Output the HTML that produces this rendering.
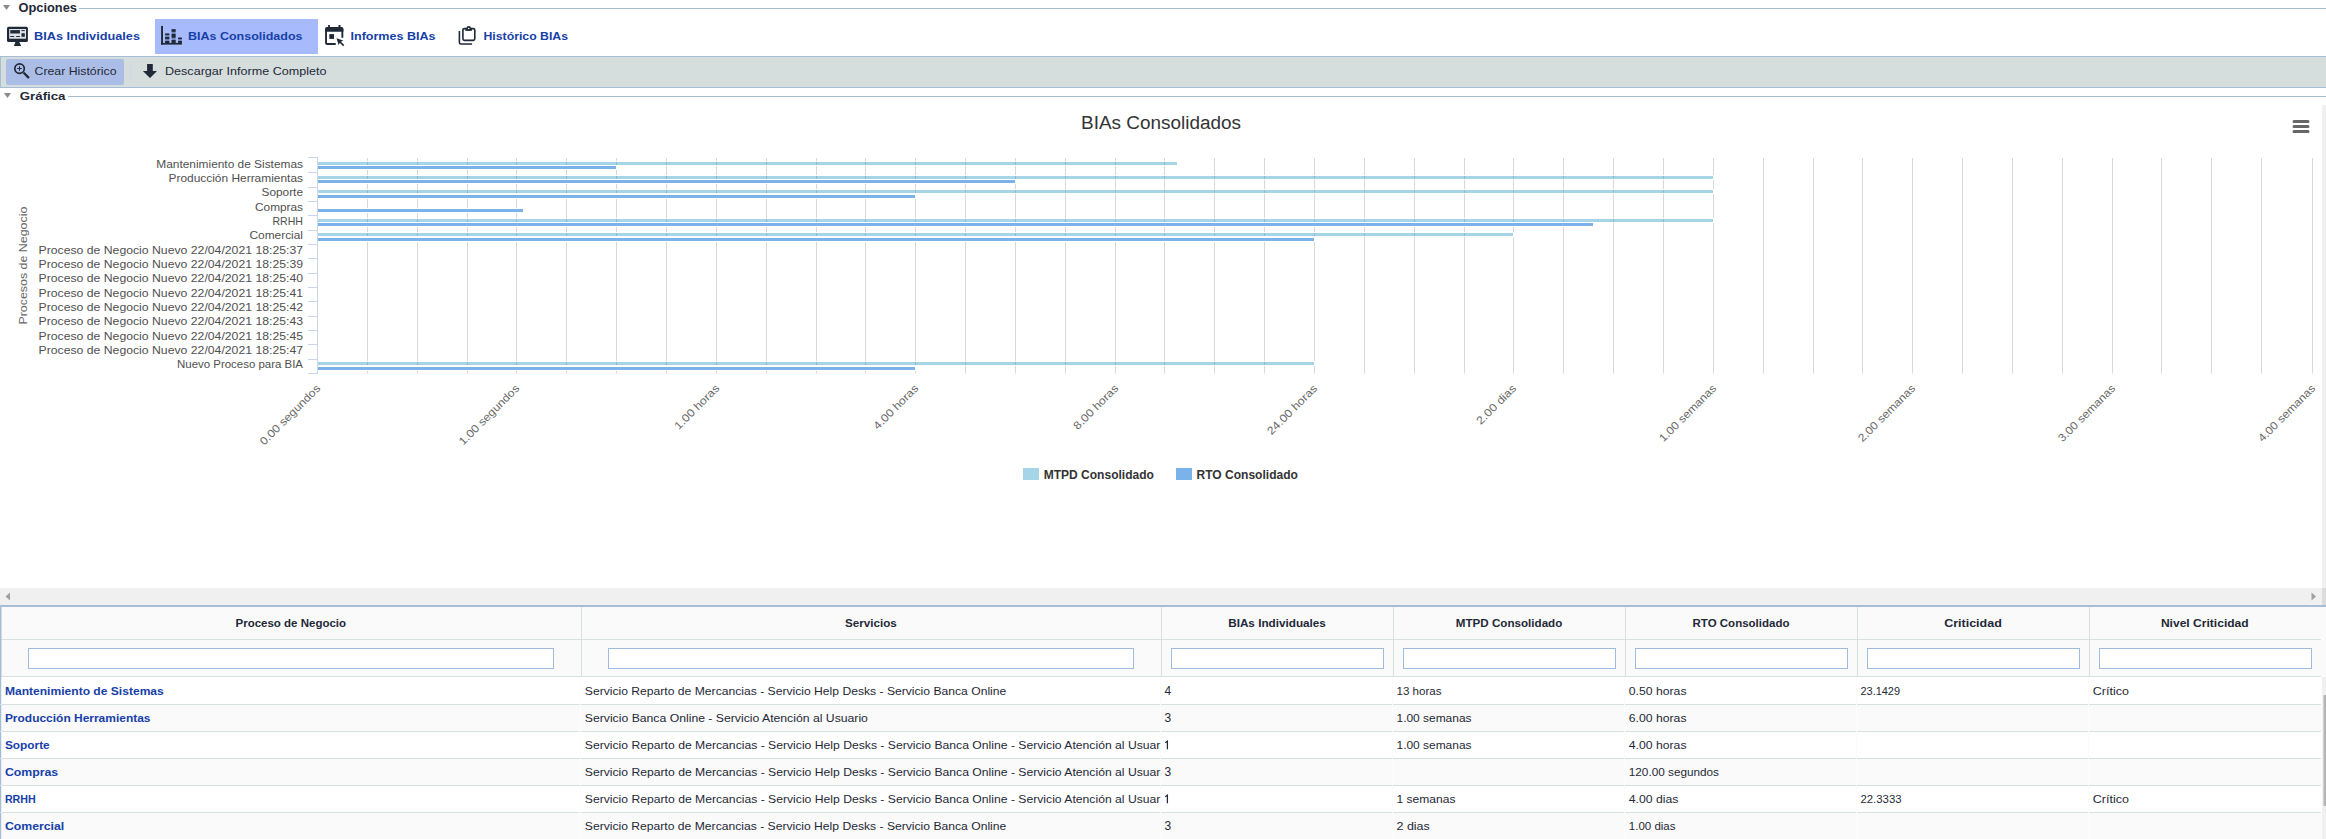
<!DOCTYPE html><html><head><meta charset="utf-8"><style>html,body{margin:0;padding:0;background:#fff;width:2326px;height:839px;overflow:hidden}svg{display:block;font-family:"Liberation Sans", sans-serif}</style></head><body>
<svg width="2326" height="839" viewBox="0 0 2326 839">
<path d="M3 5 L10 5 L6.5 10 Z" fill="#8a8a8a"/>
<text x="18.50" y="11.80" font-size="12" font-weight="bold" fill="#1f2937" text-anchor="start" textLength="58.50" lengthAdjust="spacingAndGlyphs" >Opciones</text>
<rect x="79" y="8" width="2247" height="1" fill="#a6bdd7"/>
<rect x="155" y="19" width="163" height="35" fill="#a7bbfc"/>
<text x="34.00" y="40.00" font-size="11.5" font-weight="bold" fill="#1740a8" text-anchor="start" textLength="106.00" lengthAdjust="spacingAndGlyphs" >BIAs Individuales</text>
<text x="188.00" y="40.00" font-size="11.5" font-weight="bold" fill="#1740a8" text-anchor="start" textLength="114.50" lengthAdjust="spacingAndGlyphs" >BIAs Consolidados</text>
<text x="350.50" y="40.00" font-size="11.5" font-weight="bold" fill="#1740a8" text-anchor="start" textLength="85.00" lengthAdjust="spacingAndGlyphs" >Informes BIAs</text>
<text x="483.50" y="40.00" font-size="11.5" font-weight="bold" fill="#1740a8" text-anchor="start" textLength="84.50" lengthAdjust="spacingAndGlyphs" >Histórico BIAs</text>
<g fill="#1f2937"><rect x="7" y="26.7" width="20.9" height="15.3" rx="1.6"/><path d="M15.6 41.5 L19.1 41.5 L21.2 46 L13.9 46 Z"/></g><rect x="9.2" y="29" width="16.8" height="9.7" fill="#dfe2e6"/><g fill="#1f2937"><rect x="10.3" y="30.1" width="9.6" height="3.4"/><rect x="10.3" y="36" width="3.9" height="1"/><rect x="16.2" y="36" width="3.7" height="1"/><rect x="21.4" y="30.1" width="3.4" height="1"/><rect x="21.5" y="33.2" width="3.3" height="3.6"/></g>
<g fill="#1f2937" fill-opacity="0.35"><rect x="165.1" y="33.5" width="4.2" height="9.4"/><rect x="171.6" y="29.2" width="4" height="13.7"/><rect x="178.1" y="37.6" width="3.8" height="5.3"/></g><g fill="#1f2937"><rect x="161.1" y="25.9" width="1.9" height="18.7"/><rect x="161.1" y="42.9" width="20.8" height="1.7"/><rect x="165.1" y="33.5" width="4.2" height="1.6"/><rect x="165.1" y="37" width="4.2" height="2.1"/><rect x="165.1" y="41" width="4.2" height="2"/><rect x="171.6" y="29.2" width="4" height="2.6"/><rect x="171.6" y="33.9" width="4" height="3.8"/><rect x="171.6" y="40" width="4" height="3"/><rect x="178.1" y="37.6" width="3.8" height="1.5"/><rect x="178.1" y="41" width="3.8" height="2"/></g>
<g fill="none" stroke="#1f2937" stroke-width="1.9"><path d="M335.7 44.05 H327.2 Q326.05 44.05 326.05 42.9 V29 M342.35 29 V37.7"/></g><g fill="#1f2937"><path d="M325.1 31.8 V28.8 Q325.1 27.1 326.8 27.1 H341.7 Q343.4 27.1 343.4 28.8 V31.8 Z"/><rect x="328.1" y="25" width="1.8" height="3"/><rect x="338.5" y="25" width="2" height="3"/><rect x="329.3" y="34.1" width="4.7" height="4.8"/><path d="M336.5 38.3 L343.3 40.6 L340.9 41.7 L344.3 45.1 L343.1 46.2 L339.7 42.8 L338.7 45.3 Z"/></g>
<g fill="none" stroke="#1f2937" stroke-width="1.6"><path d="M459.4 31.1 V42.5 Q459.4 44 460.9 44 H472.1"/><rect x="462.9" y="28.6" width="11.9" height="11.8" rx="1.6"/></g><g fill="#1f2937"><rect x="465.3" y="28.8" width="6.7" height="2"/><circle cx="468.7" cy="28.4" r="2.3"/></g><circle cx="468.7" cy="28.5" r="0.8" fill="#fff"/>
<rect x="0" y="56" width="2326" height="32" fill="#d5dddd"/>
<rect x="0" y="56" width="2326" height="1" fill="#a6bdd7"/>
<rect x="0" y="87" width="2326" height="1" fill="#a6bdd7"/>
<rect x="0" y="56" width="1" height="32" fill="#a6bdd7"/>
<rect x="6" y="59" width="118" height="26" rx="2" fill="#abbde6"/>
<rect x="130" y="62" width="1" height="20" fill="#c9dbe9"/>
<g fill="none" stroke="#1f2937"><circle cx="19.55" cy="68.6" r="4.75" stroke-width="1.7"/><path d="M24.2 73.3 L28.3 77.4" stroke-width="2.3" stroke-linecap="round"/><path d="M19.5 66.2 V70.8 M17.2 68.5 H21.8" stroke-width="1"/></g>
<text x="34.50" y="74.80" font-size="11.2" font-weight="normal" fill="#1f2937" text-anchor="start" textLength="82.00" lengthAdjust="spacingAndGlyphs" >Crear Histórico</text>
<path d="M147.1 64 H152.8 V71.1 H157 L150 77.9 L142.9 71.1 H147.1 Z" fill="#1f2937"/>
<text x="165.00" y="74.80" font-size="11.2" font-weight="normal" fill="#1f2937" text-anchor="start" textLength="161.50" lengthAdjust="spacingAndGlyphs" >Descargar Informe Completo</text>
<path d="M4 93 L11 93 L7.5 98 Z" fill="#8a8a8a"/>
<text x="19.80" y="99.80" font-size="11.5" font-weight="bold" fill="#1f2937" text-anchor="start" textLength="45.70" lengthAdjust="spacingAndGlyphs" >Gráfica</text>
<rect x="68" y="96" width="2258" height="1" fill="#a6bdd7"/>
<text x="1081.00" y="128.80" font-size="18" font-weight="normal" fill="#333333" text-anchor="start" textLength="160.00" lengthAdjust="spacingAndGlyphs" >BIAs Consolidados</text>
<g stroke="#666" stroke-width="3" stroke-linecap="round"><path d="M2294 121.5 H2308 M2294 126.5 H2308 M2294 131.5 H2308"/></g>
<path d="M367.5 158 V373.5 M417.5 158 V373.5 M467.5 158 V373.5 M516.5 158 V373.5 M566.5 158 V373.5 M616.5 158 V373.5 M666.5 158 V373.5 M716.5 158 V373.5 M766.5 158 V373.5 M816.5 158 V373.5 M865.5 158 V373.5 M915.5 158 V373.5 M965.5 158 V373.5 M1015.5 158 V373.5 M1065.5 158 V373.5 M1115.5 158 V373.5 M1164.5 158 V373.5 M1214.5 158 V373.5 M1264.5 158 V373.5 M1314.5 158 V373.5 M1364.5 158 V373.5 M1414.5 158 V373.5 M1464.5 158 V373.5 M1513.5 158 V373.5 M1563.5 158 V373.5 M1613.5 158 V373.5 M1663.5 158 V373.5 M1713.5 158 V373.5 M1763.5 158 V373.5 M1813.5 158 V373.5 M1862.5 158 V373.5 M1912.5 158 V373.5 M1962.5 158 V373.5 M2012.5 158 V373.5 M2062.5 158 V373.5 M2112.5 158 V373.5 M2161.5 158 V373.5 M2211.5 158 V373.5 M2261.5 158 V373.5 M2312.5 158 V373.5" stroke="#d8d8d8" stroke-width="1" fill="none"/>
<rect x="317" y="161" width="861" height="5" fill="#fff"/>
<rect x="317" y="165" width="300" height="5" fill="#fff"/>
<rect x="317" y="175" width="1397" height="5" fill="#fff"/>
<rect x="317" y="179" width="699" height="5" fill="#fff"/>
<rect x="317" y="189" width="1397" height="5" fill="#fff"/>
<rect x="317" y="194" width="599" height="5" fill="#fff"/>
<rect x="317" y="208" width="207" height="5" fill="#fff"/>
<rect x="317" y="218" width="1397" height="5" fill="#fff"/>
<rect x="317" y="222" width="1277" height="5" fill="#fff"/>
<rect x="317" y="232" width="1197" height="5" fill="#fff"/>
<rect x="317" y="237" width="998" height="5" fill="#fff"/>
<rect x="317" y="361" width="998" height="5" fill="#fff"/>
<rect x="317" y="366" width="599" height="5" fill="#fff"/>
<rect x="318" y="162" width="859" height="3" fill="#a5d5e6"/>
<path d="M367.5 162 V165 M417.5 162 V165 M467.5 162 V165 M516.5 162 V165 M566.5 162 V165 M616.5 162 V165 M666.5 162 V165 M716.5 162 V165 M766.5 162 V165 M816.5 162 V165 M865.5 162 V165 M915.5 162 V165 M965.5 162 V165 M1015.5 162 V165 M1065.5 162 V165 M1115.5 162 V165 M1164.5 162 V165" stroke="#2a5d70" stroke-opacity="0.22" stroke-width="1" fill="none"/>
<rect x="318" y="166" width="298" height="3" fill="#7cb2ea"/>
<rect x="318" y="176" width="1395" height="3" fill="#a5d5e6"/>
<path d="M367.5 176 V179 M417.5 176 V179 M467.5 176 V179 M516.5 176 V179 M566.5 176 V179 M616.5 176 V179 M666.5 176 V179 M716.5 176 V179 M766.5 176 V179 M816.5 176 V179 M865.5 176 V179 M915.5 176 V179 M965.5 176 V179 M1015.5 176 V179 M1065.5 176 V179 M1115.5 176 V179 M1164.5 176 V179 M1214.5 176 V179 M1264.5 176 V179 M1314.5 176 V179 M1364.5 176 V179 M1414.5 176 V179 M1464.5 176 V179 M1513.5 176 V179 M1563.5 176 V179 M1613.5 176 V179 M1663.5 176 V179" stroke="#2a5d70" stroke-opacity="0.22" stroke-width="1" fill="none"/>
<rect x="318" y="180" width="697" height="3" fill="#7cb2ea"/>
<rect x="318" y="190" width="1395" height="3" fill="#a5d5e6"/>
<path d="M367.5 190 V193 M417.5 190 V193 M467.5 190 V193 M516.5 190 V193 M566.5 190 V193 M616.5 190 V193 M666.5 190 V193 M716.5 190 V193 M766.5 190 V193 M816.5 190 V193 M865.5 190 V193 M915.5 190 V193 M965.5 190 V193 M1015.5 190 V193 M1065.5 190 V193 M1115.5 190 V193 M1164.5 190 V193 M1214.5 190 V193 M1264.5 190 V193 M1314.5 190 V193 M1364.5 190 V193 M1414.5 190 V193 M1464.5 190 V193 M1513.5 190 V193 M1563.5 190 V193 M1613.5 190 V193 M1663.5 190 V193" stroke="#2a5d70" stroke-opacity="0.22" stroke-width="1" fill="none"/>
<rect x="318" y="195" width="597" height="3" fill="#7cb2ea"/>
<rect x="318" y="209" width="205" height="3" fill="#7cb2ea"/>
<rect x="318" y="219" width="1395" height="3" fill="#a5d5e6"/>
<path d="M367.5 219 V222 M417.5 219 V222 M467.5 219 V222 M516.5 219 V222 M566.5 219 V222 M616.5 219 V222 M666.5 219 V222 M716.5 219 V222 M766.5 219 V222 M816.5 219 V222 M865.5 219 V222 M915.5 219 V222 M965.5 219 V222 M1015.5 219 V222 M1065.5 219 V222 M1115.5 219 V222 M1164.5 219 V222 M1214.5 219 V222 M1264.5 219 V222 M1314.5 219 V222 M1364.5 219 V222 M1414.5 219 V222 M1464.5 219 V222 M1513.5 219 V222 M1563.5 219 V222 M1613.5 219 V222 M1663.5 219 V222" stroke="#2a5d70" stroke-opacity="0.22" stroke-width="1" fill="none"/>
<rect x="318" y="223" width="1275" height="3" fill="#7cb2ea"/>
<rect x="318" y="233" width="1195" height="3" fill="#a5d5e6"/>
<path d="M367.5 233 V236 M417.5 233 V236 M467.5 233 V236 M516.5 233 V236 M566.5 233 V236 M616.5 233 V236 M666.5 233 V236 M716.5 233 V236 M766.5 233 V236 M816.5 233 V236 M865.5 233 V236 M915.5 233 V236 M965.5 233 V236 M1015.5 233 V236 M1065.5 233 V236 M1115.5 233 V236 M1164.5 233 V236 M1214.5 233 V236 M1264.5 233 V236 M1314.5 233 V236 M1364.5 233 V236 M1414.5 233 V236 M1464.5 233 V236" stroke="#2a5d70" stroke-opacity="0.22" stroke-width="1" fill="none"/>
<rect x="318" y="238" width="996" height="3" fill="#7cb2ea"/>
<rect x="318" y="362" width="996" height="3" fill="#a5d5e6"/>
<path d="M367.5 362 V365 M417.5 362 V365 M467.5 362 V365 M516.5 362 V365 M566.5 362 V365 M616.5 362 V365 M666.5 362 V365 M716.5 362 V365 M766.5 362 V365 M816.5 362 V365 M865.5 362 V365 M915.5 362 V365 M965.5 362 V365 M1015.5 362 V365 M1065.5 362 V365 M1115.5 362 V365 M1164.5 362 V365 M1214.5 362 V365 M1264.5 362 V365" stroke="#2a5d70" stroke-opacity="0.22" stroke-width="1" fill="none"/>
<rect x="318" y="367" width="597" height="3" fill="#7cb2ea"/>
<path d="M317.5 157 V374 M308 157.5 H317 M308 172.5 H317 M308 187.5 H317 M308 201.5 H317 M308 215.5 H317 M308 230.5 H317 M308 244.5 H317 M308 258.5 H317 M308 273.5 H317 M308 287.5 H317 M308 301.5 H317 M308 316.5 H317 M308 330.5 H317 M308 344.5 H317 M308 359.5 H317 M308 373.5 H317" stroke="#ccd6eb" stroke-width="1" fill="none"/>
<text x="156.30" y="168.00" font-size="11" font-weight="normal" fill="#505050" text-anchor="start" textLength="146.70" lengthAdjust="spacingAndGlyphs" >Mantenimiento de Sistemas</text>
<text x="168.50" y="182.00" font-size="11" font-weight="normal" fill="#505050" text-anchor="start" textLength="134.50" lengthAdjust="spacingAndGlyphs" >Producción Herramientas</text>
<text x="261.50" y="196.00" font-size="11" font-weight="normal" fill="#505050" text-anchor="start" textLength="41.50" lengthAdjust="spacingAndGlyphs" >Soporte</text>
<text x="255.00" y="211.00" font-size="11" font-weight="normal" fill="#505050" text-anchor="start" textLength="48.00" lengthAdjust="spacingAndGlyphs" >Compras</text>
<text x="272.50" y="224.60" font-size="11" font-weight="normal" fill="#505050" text-anchor="start" textLength="30.50" lengthAdjust="spacingAndGlyphs" >RRHH</text>
<text x="249.50" y="238.80" font-size="11" font-weight="normal" fill="#505050" text-anchor="start" textLength="53.50" lengthAdjust="spacingAndGlyphs" >Comercial</text>
<text x="38.50" y="254.00" font-size="11" font-weight="normal" fill="#505050" text-anchor="start" textLength="264.50" lengthAdjust="spacingAndGlyphs" >Proceso de Negocio Nuevo 22/04/2021 18:25:37</text>
<text x="38.50" y="267.50" font-size="11" font-weight="normal" fill="#505050" text-anchor="start" textLength="264.50" lengthAdjust="spacingAndGlyphs" >Proceso de Negocio Nuevo 22/04/2021 18:25:39</text>
<text x="38.50" y="281.50" font-size="11" font-weight="normal" fill="#505050" text-anchor="start" textLength="264.50" lengthAdjust="spacingAndGlyphs" >Proceso de Negocio Nuevo 22/04/2021 18:25:40</text>
<text x="38.50" y="297.10" font-size="11" font-weight="normal" fill="#505050" text-anchor="start" textLength="264.50" lengthAdjust="spacingAndGlyphs" >Proceso de Negocio Nuevo 22/04/2021 18:25:41</text>
<text x="38.50" y="311.10" font-size="11" font-weight="normal" fill="#505050" text-anchor="start" textLength="264.50" lengthAdjust="spacingAndGlyphs" >Proceso de Negocio Nuevo 22/04/2021 18:25:42</text>
<text x="38.50" y="325.10" font-size="11" font-weight="normal" fill="#505050" text-anchor="start" textLength="264.50" lengthAdjust="spacingAndGlyphs" >Proceso de Negocio Nuevo 22/04/2021 18:25:43</text>
<text x="38.50" y="339.80" font-size="11" font-weight="normal" fill="#505050" text-anchor="start" textLength="264.50" lengthAdjust="spacingAndGlyphs" >Proceso de Negocio Nuevo 22/04/2021 18:25:45</text>
<text x="38.50" y="353.80" font-size="11" font-weight="normal" fill="#505050" text-anchor="start" textLength="264.50" lengthAdjust="spacingAndGlyphs" >Proceso de Negocio Nuevo 22/04/2021 18:25:47</text>
<text x="177.00" y="367.60" font-size="11" font-weight="normal" fill="#505050" text-anchor="start" textLength="126.00" lengthAdjust="spacingAndGlyphs" >Nuevo Proceso para BIA</text>
<text transform="translate(27.3 265.6) rotate(-90)" font-size="11" fill="#666" text-anchor="middle" textLength="118" lengthAdjust="spacingAndGlyphs">Procesos de Negocio</text>
<text transform="translate(321.00 389) rotate(-45)" font-size="11" fill="#666" text-anchor="end" textLength="80.3" lengthAdjust="spacingAndGlyphs">0.00 segundos</text>
<text transform="translate(520.00 389) rotate(-45)" font-size="11" fill="#666" text-anchor="end" textLength="80.3" lengthAdjust="spacingAndGlyphs">1.00 segundos</text>
<text transform="translate(720.00 389) rotate(-45)" font-size="11" fill="#666" text-anchor="end" textLength="58.2" lengthAdjust="spacingAndGlyphs">1.00 horas</text>
<text transform="translate(919.00 389) rotate(-45)" font-size="11" fill="#666" text-anchor="end" textLength="58.2" lengthAdjust="spacingAndGlyphs">4.00 horas</text>
<text transform="translate(1119.00 389) rotate(-45)" font-size="11" fill="#666" text-anchor="end" textLength="58.2" lengthAdjust="spacingAndGlyphs">8.00 horas</text>
<text transform="translate(1318.00 389) rotate(-45)" font-size="11" fill="#666" text-anchor="end" textLength="65.9" lengthAdjust="spacingAndGlyphs">24.00 horas</text>
<text transform="translate(1517.00 389) rotate(-45)" font-size="11" fill="#666" text-anchor="end" textLength="51.2" lengthAdjust="spacingAndGlyphs">2.00 dias</text>
<text transform="translate(1717.00 389) rotate(-45)" font-size="11" fill="#666" text-anchor="end" textLength="75.8" lengthAdjust="spacingAndGlyphs">1.00 semanas</text>
<text transform="translate(1916.00 389) rotate(-45)" font-size="11" fill="#666" text-anchor="end" textLength="75.8" lengthAdjust="spacingAndGlyphs">2.00 semanas</text>
<text transform="translate(2116.00 389) rotate(-45)" font-size="11" fill="#666" text-anchor="end" textLength="75.8" lengthAdjust="spacingAndGlyphs">3.00 semanas</text>
<text transform="translate(2316.00 389) rotate(-45)" font-size="11" fill="#666" text-anchor="end" textLength="75.8" lengthAdjust="spacingAndGlyphs">4.00 semanas</text>
<rect x="1023" y="468" width="16" height="12" fill="#a5d5e6"/>
<text x="1043.70" y="479.00" font-size="12" font-weight="bold" fill="#333333" text-anchor="start" textLength="110.20" lengthAdjust="spacingAndGlyphs" >MTPD Consolidado</text>
<rect x="1176" y="468" width="16" height="12" fill="#7cb2ea"/>
<text x="1196.50" y="479.00" font-size="12" font-weight="bold" fill="#333333" text-anchor="start" textLength="101.40" lengthAdjust="spacingAndGlyphs" >RTO Consolidado</text>
<rect x="2322" y="105" width="4" height="483" fill="#f0f0f0"/>
<rect x="0" y="588" width="2326" height="17" fill="#f0f0f0"/>
<rect x="2322" y="588" width="4" height="17" fill="#dcdcdc"/>
<path d="M5.5 596.5 L10 592.5 V600.5 Z" fill="#a0a0a0"/>
<path d="M2316 596.5 L2311.5 592.5 V600.5 Z" fill="#a0a0a0"/>
<rect x="0" y="605" width="2326" height="2" fill="#a6bdd7"/>
<rect x="0" y="607" width="2326" height="70" fill="#fafafa"/>
<rect x="0" y="639" width="2321" height="1" fill="#d8e0e0"/>
<rect x="0" y="676" width="2321" height="1" fill="#d8e0e0"/>
<rect x="581" y="607" width="1" height="69" fill="#d8e0e0"/>
<rect x="1161" y="607" width="1" height="69" fill="#d8e0e0"/>
<rect x="1393" y="607" width="1" height="69" fill="#d8e0e0"/>
<rect x="1625" y="607" width="1" height="69" fill="#d8e0e0"/>
<rect x="1857" y="607" width="1" height="69" fill="#d8e0e0"/>
<rect x="2089" y="607" width="1" height="69" fill="#d8e0e0"/>
<rect x="0" y="605" width="1.5" height="234" fill="#a6bdd7"/>
<rect x="28.5" y="648.5" width="525" height="20" fill="#fff" stroke="#9fbbdf" stroke-width="1"/>
<rect x="608.5" y="648.5" width="525" height="20" fill="#fff" stroke="#9fbbdf" stroke-width="1"/>
<rect x="1171.5" y="648.5" width="212" height="20" fill="#fff" stroke="#9fbbdf" stroke-width="1"/>
<rect x="1403.5" y="648.5" width="212" height="20" fill="#fff" stroke="#9fbbdf" stroke-width="1"/>
<rect x="1635.5" y="648.5" width="212" height="20" fill="#fff" stroke="#9fbbdf" stroke-width="1"/>
<rect x="1867.5" y="648.5" width="212" height="20" fill="#fff" stroke="#9fbbdf" stroke-width="1"/>
<rect x="2099.5" y="648.5" width="212" height="20" fill="#fff" stroke="#9fbbdf" stroke-width="1"/>
<text x="235.50" y="626.80" font-size="11.5" font-weight="bold" fill="#1f2937" text-anchor="start" textLength="110.60" lengthAdjust="spacingAndGlyphs" >Proceso de Negocio</text>
<text x="845.10" y="626.80" font-size="11.5" font-weight="bold" fill="#1f2937" text-anchor="start" textLength="51.70" lengthAdjust="spacingAndGlyphs" >Servicios</text>
<text x="1228.20" y="626.80" font-size="11.5" font-weight="bold" fill="#1f2937" text-anchor="start" textLength="97.70" lengthAdjust="spacingAndGlyphs" >BIAs Individuales</text>
<text x="1455.80" y="626.80" font-size="11.5" font-weight="bold" fill="#1f2937" text-anchor="start" textLength="106.50" lengthAdjust="spacingAndGlyphs" >MTPD Consolidado</text>
<text x="1692.50" y="626.80" font-size="11.5" font-weight="bold" fill="#1f2937" text-anchor="start" textLength="97.00" lengthAdjust="spacingAndGlyphs" >RTO Consolidado</text>
<text x="1944.20" y="626.80" font-size="11.5" font-weight="bold" fill="#1f2937" text-anchor="start" textLength="57.60" lengthAdjust="spacingAndGlyphs" >Criticidad</text>
<text x="2160.90" y="626.80" font-size="11.5" font-weight="bold" fill="#1f2937" text-anchor="start" textLength="87.80" lengthAdjust="spacingAndGlyphs" >Nivel Criticidad</text>
<rect x="1.5" y="677" width="2320" height="27" fill="#ffffff"/>
<rect x="1.5" y="704" width="2320" height="27" fill="#fafafa"/>
<rect x="1.5" y="731" width="2320" height="27" fill="#ffffff"/>
<rect x="1.5" y="758" width="2320" height="27" fill="#fafafa"/>
<rect x="1.5" y="785" width="2320" height="27" fill="#ffffff"/>
<rect x="1.5" y="812" width="2320" height="27" fill="#fafafa"/>
<rect x="0" y="704" width="2321" height="1" fill="#d8e0e0"/>
<rect x="0" y="731" width="2321" height="1" fill="#d8e0e0"/>
<rect x="0" y="758" width="2321" height="1" fill="#d8e0e0"/>
<rect x="0" y="785" width="2321" height="1" fill="#d8e0e0"/>
<rect x="0" y="812" width="2321" height="1" fill="#d8e0e0"/>
<rect x="0" y="839" width="2321" height="1" fill="#d8e0e0"/>
<rect x="580" y="677" width="1" height="162" fill="#fcfcfc"/>
<rect x="1160" y="677" width="1" height="162" fill="#fcfcfc"/>
<rect x="1392" y="677" width="1" height="162" fill="#fcfcfc"/>
<rect x="1624" y="677" width="1" height="162" fill="#fcfcfc"/>
<rect x="1856" y="677" width="1" height="162" fill="#fcfcfc"/>
<rect x="2088" y="677" width="1" height="162" fill="#fcfcfc"/>
<rect x="2322" y="677" width="4" height="162" fill="#f0f0f0"/>
<rect x="2323.5" y="695" width="2.5" height="111" fill="#b5b5b5"/>
<text x="4.90" y="695.30" font-size="11.3" font-weight="bold" fill="#1740a8" text-anchor="start" textLength="158.90" lengthAdjust="spacingAndGlyphs" >Mantenimiento de Sistemas</text>
<text x="584.80" y="695.30" font-size="11.5" font-weight="normal" fill="#1f2937" text-anchor="start" textLength="421.50" lengthAdjust="spacingAndGlyphs" >Servicio Reparto de Mercancias - Servicio Help Desks - Servicio Banca Online</text>
<text x="1164.6" y="695.30" font-size="12" fill="#1f2937">4</text>
<text x="1396.50" y="695.30" font-size="11.5" font-weight="normal" fill="#1f2937" text-anchor="start" textLength="45.00" lengthAdjust="spacingAndGlyphs" >13 horas</text>
<text x="1628.80" y="695.30" font-size="11.5" font-weight="normal" fill="#1f2937" text-anchor="start" textLength="57.70" lengthAdjust="spacingAndGlyphs" >0.50 horas</text>
<text x="1860.50" y="695.30" font-size="11.5" font-weight="normal" fill="#1f2937" text-anchor="start" textLength="39.50" lengthAdjust="spacingAndGlyphs" >23.1429</text>
<text x="2092.80" y="695.30" font-size="11.5" font-weight="normal" fill="#1f2937" text-anchor="start" textLength="36.10" lengthAdjust="spacingAndGlyphs" >Crítico</text>
<text x="4.90" y="722.30" font-size="11.3" font-weight="bold" fill="#1740a8" text-anchor="start" textLength="145.60" lengthAdjust="spacingAndGlyphs" >Producción Herramientas</text>
<text x="584.80" y="722.30" font-size="11.5" font-weight="normal" fill="#1f2937" text-anchor="start" textLength="283.10" lengthAdjust="spacingAndGlyphs" >Servicio Banca Online - Servicio Atención al Usuario</text>
<text x="1164.6" y="722.30" font-size="12" fill="#1f2937">3</text>
<text x="1396.50" y="722.30" font-size="11.5" font-weight="normal" fill="#1f2937" text-anchor="start" textLength="75.00" lengthAdjust="spacingAndGlyphs" >1.00 semanas</text>
<text x="1628.80" y="722.30" font-size="11.5" font-weight="normal" fill="#1f2937" text-anchor="start" textLength="57.70" lengthAdjust="spacingAndGlyphs" >6.00 horas</text>
<text x="4.90" y="749.30" font-size="11.3" font-weight="bold" fill="#1740a8" text-anchor="start" textLength="44.80" lengthAdjust="spacingAndGlyphs" >Soporte</text>
<text x="584.80" y="749.30" font-size="11.5" font-weight="normal" fill="#1f2937" text-anchor="start" textLength="575.60" lengthAdjust="spacingAndGlyphs" >Servicio Reparto de Mercancias - Servicio Help Desks - Servicio Banca Online - Servicio Atención al Usuar</text>
<path d="M1165.3 742.70 L1167.4 741.20 V749.30" fill="none" stroke="#1f2937" stroke-width="1.25"/>
<text x="1396.50" y="749.30" font-size="11.5" font-weight="normal" fill="#1f2937" text-anchor="start" textLength="75.00" lengthAdjust="spacingAndGlyphs" >1.00 semanas</text>
<text x="1628.80" y="749.30" font-size="11.5" font-weight="normal" fill="#1f2937" text-anchor="start" textLength="57.70" lengthAdjust="spacingAndGlyphs" >4.00 horas</text>
<text x="4.90" y="776.30" font-size="11.3" font-weight="bold" fill="#1740a8" text-anchor="start" textLength="53.30" lengthAdjust="spacingAndGlyphs" >Compras</text>
<text x="584.80" y="776.30" font-size="11.5" font-weight="normal" fill="#1f2937" text-anchor="start" textLength="575.60" lengthAdjust="spacingAndGlyphs" >Servicio Reparto de Mercancias - Servicio Help Desks - Servicio Banca Online - Servicio Atención al Usuar</text>
<text x="1164.6" y="776.30" font-size="12" fill="#1f2937">3</text>
<text x="1628.80" y="776.30" font-size="11.5" font-weight="normal" fill="#1f2937" text-anchor="start" textLength="90.20" lengthAdjust="spacingAndGlyphs" >120.00 segundos</text>
<text x="4.90" y="803.30" font-size="11.3" font-weight="bold" fill="#1740a8" text-anchor="start" textLength="30.90" lengthAdjust="spacingAndGlyphs" >RRHH</text>
<text x="584.80" y="803.30" font-size="11.5" font-weight="normal" fill="#1f2937" text-anchor="start" textLength="575.60" lengthAdjust="spacingAndGlyphs" >Servicio Reparto de Mercancias - Servicio Help Desks - Servicio Banca Online - Servicio Atención al Usuar</text>
<path d="M1165.3 796.70 L1167.4 795.20 V803.30" fill="none" stroke="#1f2937" stroke-width="1.25"/>
<text x="1396.50" y="803.30" font-size="11.5" font-weight="normal" fill="#1f2937" text-anchor="start" textLength="59.00" lengthAdjust="spacingAndGlyphs" >1 semanas</text>
<text x="1628.80" y="803.30" font-size="11.5" font-weight="normal" fill="#1f2937" text-anchor="start" textLength="49.70" lengthAdjust="spacingAndGlyphs" >4.00 dias</text>
<text x="1860.50" y="803.30" font-size="11.5" font-weight="normal" fill="#1f2937" text-anchor="start" textLength="41.00" lengthAdjust="spacingAndGlyphs" >22.3333</text>
<text x="2092.80" y="803.30" font-size="11.5" font-weight="normal" fill="#1f2937" text-anchor="start" textLength="36.10" lengthAdjust="spacingAndGlyphs" >Crítico</text>
<text x="4.90" y="830.30" font-size="11.3" font-weight="bold" fill="#1740a8" text-anchor="start" textLength="59.40" lengthAdjust="spacingAndGlyphs" >Comercial</text>
<text x="584.80" y="830.30" font-size="11.5" font-weight="normal" fill="#1f2937" text-anchor="start" textLength="421.50" lengthAdjust="spacingAndGlyphs" >Servicio Reparto de Mercancias - Servicio Help Desks - Servicio Banca Online</text>
<text x="1164.6" y="830.30" font-size="12" fill="#1f2937">3</text>
<text x="1396.50" y="830.30" font-size="11.5" font-weight="normal" fill="#1f2937" text-anchor="start" textLength="33.30" lengthAdjust="spacingAndGlyphs" >2 dias</text>
<text x="1628.80" y="830.30" font-size="11.5" font-weight="normal" fill="#1f2937" text-anchor="start" textLength="46.70" lengthAdjust="spacingAndGlyphs" >1.00 dias</text>
</svg></body></html>
